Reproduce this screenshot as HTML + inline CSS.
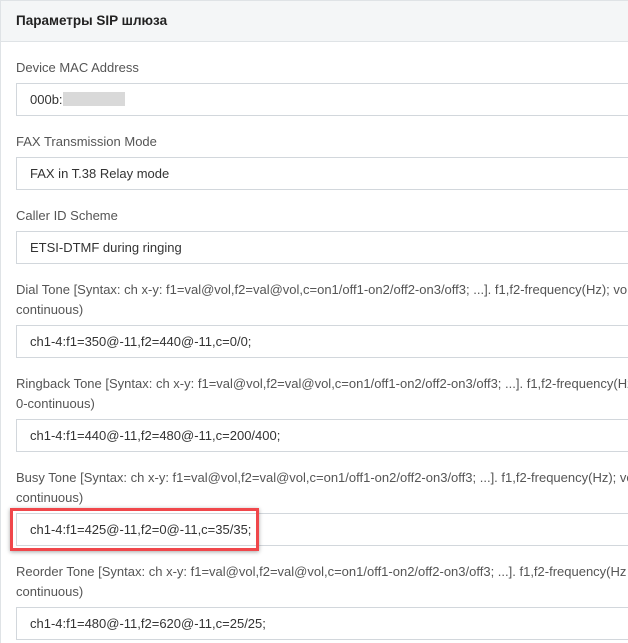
<!DOCTYPE html>
<html><head><meta charset="utf-8"><style>
html,body{margin:0;padding:0;width:628px;height:643px;overflow:hidden;background:#fff;font-family:"Liberation Sans","DejaVu Sans",sans-serif;position:relative;}
.wrap{position:absolute;left:0;top:0;width:627px;height:642px;border-left:1px solid #dfe3e6;border-top:1px solid #dfe3e6;}
.hdr{position:absolute;left:1px;top:1px;width:627px;height:40px;background:#f4f6f7;border-bottom:1px solid #dfe3e6;}
.hdr span{position:absolute;left:15px;top:12px;font-size:13.5px;font-weight:bold;color:#222;}
.lbl{position:absolute;left:16px;font-size:13px;color:#555;line-height:20px;white-space:nowrap;overflow:hidden;width:612px;}
.inp{position:absolute;left:16px;width:612px;height:33px;border:1px solid #d2d7dc;border-right:none;box-sizing:border-box;font-size:13px;color:#333;padding-left:13px;line-height:31px;white-space:nowrap;overflow:hidden;}
.red{position:absolute;left:10px;top:508px;width:249px;height:43px;border:3px solid #f0474b;box-sizing:border-box;box-shadow:0 1px 4px rgba(0,0,0,.35);}
.mask{display:inline-block;width:62px;height:14px;background:#d9d9d9;vertical-align:-2px;}
</style></head><body>
<div class="wrap"></div>
<div class="hdr"><span>Параметры SIP шлюза</span></div>
<div class="lbl" style="top:58px">Device MAC Address</div>
<div class="inp" style="top:83px">000b:<span class="mask"></span></div>
<div class="lbl" style="top:132px">FAX Transmission Mode</div>
<div class="inp" style="top:157px">FAX in T.38 Relay mode</div>
<div class="lbl" style="top:206px">Caller ID Scheme</div>
<div class="inp" style="top:231px">ETSI-DTMF during ringing</div>
<div class="lbl" style="top:280px">Dial Tone [Syntax: ch x-y: f1=val@vol,f2=val@vol,c=on1/off1-on2/off2-on3/off3; ...]. f1,f2-frequency(Hz); vol<br>continuous)</div>
<div class="inp" style="top:325px">ch1-4:f1=350@-11,f2=440@-11,c=0/0;</div>
<div class="lbl" style="top:374px">Ringback Tone [Syntax: ch x-y: f1=val@vol,f2=val@vol,c=on1/off1-on2/off2-on3/off3; ...]. f1,f2-frequency(Hz<br>0-continuous)</div>
<div class="inp" style="top:419px">ch1-4:f1=440@-11,f2=480@-11,c=200/400;</div>
<div class="lbl" style="top:468px">Busy Tone [Syntax: ch x-y: f1=val@vol,f2=val@vol,c=on1/off1-on2/off2-on3/off3; ...]. f1,f2-frequency(Hz); vo<br>continuous)</div>
<div class="inp" style="top:513px">ch1-4:f1=425@-11,f2=0@-11,c=35/35;</div>
<div class="red"></div>
<div class="lbl" style="top:562px">Reorder Tone [Syntax: ch x-y: f1=val@vol,f2=val@vol,c=on1/off1-on2/off2-on3/off3; ...]. f1,f2-frequency(Hz<br>continuous)</div>
<div class="inp" style="top:607px">ch1-4:f1=480@-11,f2=620@-11,c=25/25;</div>
</body></html>
